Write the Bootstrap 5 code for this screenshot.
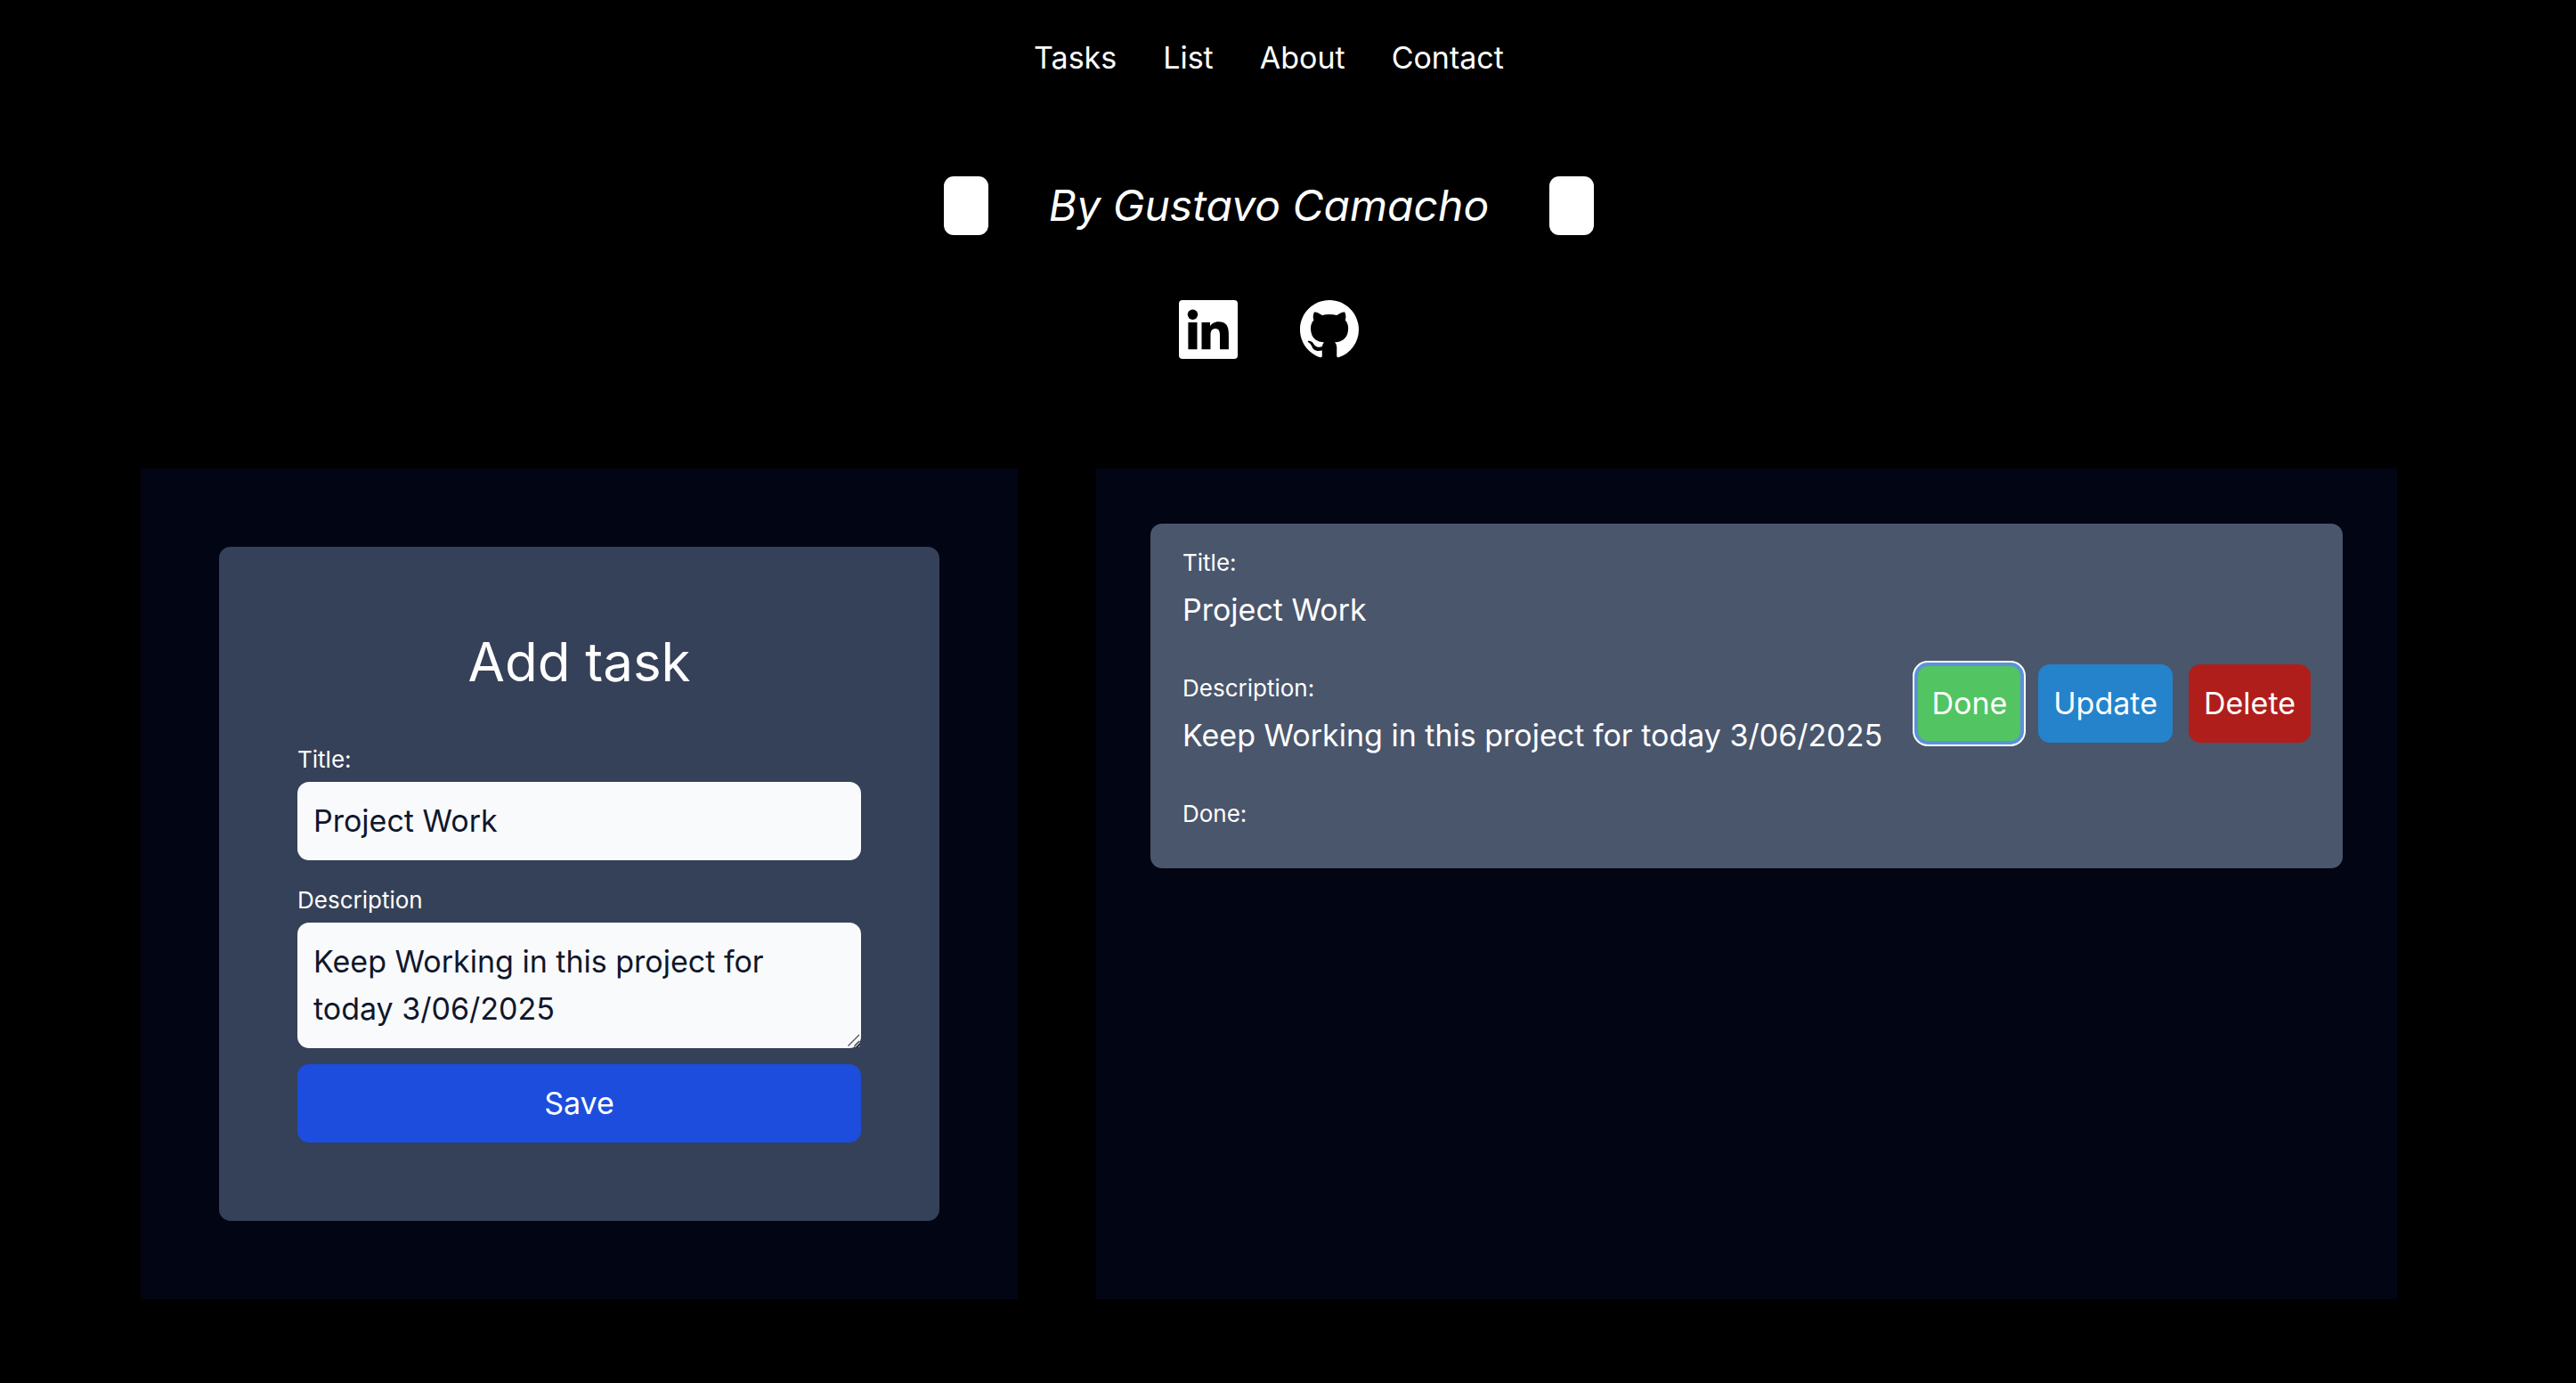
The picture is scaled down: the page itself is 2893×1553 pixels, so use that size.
<!DOCTYPE html>
<html lang="en">
<head>
<meta charset="utf-8">
<meta name="viewport" content="width=device-width, initial-scale=1">
<title>Tasks</title>
<link href="https://cdn.jsdelivr.net/npm/bootstrap@5.3.0/dist/css/bootstrap.min.css" rel="stylesheet">
<style>
  :root { --gutter: 88px; --radius: 13px; }
  body {
    background: #000; color: #fff;
    font-family: Inter, "Liberation Sans", sans-serif;
    font-size: 34px; line-height: 53px;
    padding: 38px 43px 94px 0;
  }
  .site-nav { gap: 52px; margin-bottom: 107px; }
  .site-nav a { color: #fff; text-decoration: none; }
  .byline { gap: 68px; margin-bottom: 73px; font-size: 48px; line-height: 66px; }
  .tile { width: 50px; height: 66px; border-radius: 11px; background: #fff; }
  .socials { gap: 70px; margin-bottom: 123px; }
  .socials a { color: #fff; }
  .socials svg { display: block; width: 66px; height: 66px; }
  .board { display: grid; grid-template-columns: 985fr 1461fr; gap: var(--gutter); margin: 0 158px; }
  .pane { background: #020514; }
  .pane-form { padding: var(--gutter); }
  .pane-list { padding: 62px 61px; }
  .task-form { background: #354158; border-radius: var(--radius); padding: var(--gutter); }
  .task-form h1 { font-size: 60px; line-height: 83px; font-weight: 400; margin: 0 0 50px; }
  .task-form label, .caption-line { font-size: 26px; }
  .task-form label { line-height: 35px; margin-bottom: 8px; }
  .task-form .form-control {
    background: #f9fafc; color: #0f172b; border: 0; border-radius: var(--radius);
    font-size: 34px; line-height: 53px; padding: 17px 18px 18px;
  }
  .task-form textarea.form-control { display: block; min-height: 0; }
  .title-box { margin-bottom: 27px; }
  .notes-box { margin-bottom: 18px; }
  .grip { position: absolute; right: 1px; bottom: 2px; width: 14px; height: 14px; pointer-events: none; }
  .btn-task {
    --bs-btn-color: #fff; --bs-btn-hover-color: #fff;
    border: 0; border-radius: var(--radius); color: #fff;
    font-size: 34px; line-height: 53px; padding: 17px 17px 18px;
  }
  .btn-save { background: #1c4ddc; }
  .btn-done { background: #52c462; outline: 4px solid #5b92da; outline-offset: -2px; box-shadow: 0 0 0 4px #fff; }
  .btn-update { background: #2483cb; }
  .btn-delete { background: #b01e1b; }
  .task-item { background: #4a566c; border-radius: var(--radius); padding: 17px 36px 0; }
  .task-item dl { margin: 0; }
  .task-item dt { font-weight: 400; }
  .task-item dd { margin: 0 0 35px; }
  .actions { gap: 18px; }
</style>
</head>
<body>
<header>
  <nav class="site-nav d-flex justify-content-center" aria-label="Main">
    <a href="#tasks">Tasks</a>
    <a href="#list">List</a>
    <a href="#about">About</a>
    <a href="#contact">Contact</a>
  </nav>
  <div class="byline d-flex justify-content-center align-items-center">
    <span class="tile"></span>
    <em>By Gustavo Camacho</em>
    <span class="tile"></span>
  </div>
  <div class="socials d-flex justify-content-center">
    <a href="#linkedin" aria-label="LinkedIn">
      <svg viewBox="0 0 66 66" aria-hidden="true"><rect width="66" height="66" rx="4" fill="currentColor"/><g fill="#000"><circle cx="15.5" cy="16.2" r="5.7"/><path d="M10.4 25h10.1v30.3H10.4zM25.5 25h9.5v4.2h.1c1.5-2.6 4.7-5 9.3-5 9.3 0 11.5 5.6 11.5 14v17.1H46V40.3c0-3.7-.3-8.2-5.1-8.2s-5.4 4-5.4 8v15.2h-10z"/></g></svg>
    </a>
    <a href="#github" aria-label="GitHub">
      <svg viewBox="0 0 16 16" fill="currentColor" aria-hidden="true"><path d="M8 0C3.58 0 0 3.58 0 8c0 3.54 2.29 6.53 5.47 7.59.4.07.55-.17.55-.38 0-.19-.01-.82-.01-1.49-2.01.37-2.53-.49-2.69-.94-.09-.23-.48-.94-.82-1.13-.28-.15-.68-.52-.01-.53.63-.01 1.08.58 1.23.82.72 1.21 1.87.87 2.33.66.07-.52.28-.87.51-1.07-1.78-.2-3.64-.89-3.64-3.95 0-.87.31-1.59.82-2.15-.08-.2-.36-1.02.08-2.12 0 0 .67-.21 2.2.82.64-.18 1.32-.27 2-.27s1.36.09 2 .27c1.53-1.04 2.2-.82 2.2-.82.44 1.1.16 1.92.08 2.12.51.56.82 1.27.82 2.15 0 3.07-1.87 3.75-3.65 3.95.29.25.54.73.54 1.48 0 1.07-.01 1.93-.01 2.2 0 .21.15.46.55.38A8.01 8.01 0 0 0 16 8c0-4.42-3.58-8-8-8"/></svg>
    </a>
  </div>
</header>
<main class="board">
  <section class="pane pane-form" id="tasks">
    <form class="task-form d-flex flex-column">
      <h1 class="text-center">Add task</h1>
      <label for="title">Title:</label>
      <input class="form-control title-box" id="title" type="text" value="Project Work">
      <label for="description">Description</label>
      <div class="notes-box position-relative">
        <textarea class="form-control" id="description" rows="2">Keep Working in this project for today 3/06/2025</textarea>
        <svg class="grip" viewBox="0 0 14 14" fill="none" stroke="#55575c" stroke-width="1.4" aria-hidden="true"><path d="M.5 13.500 13 1M7.500 13.500 13 8"/></svg>
      </div>
      <button class="btn btn-task btn-save w-100" type="button">Save</button>
    </form>
  </section>
  <section class="pane pane-list" id="list">
    <article class="task-item d-flex justify-content-between align-items-center">
      <dl>
        <dt class="caption-line">Title:</dt>
        <dd>Project Work</dd>
        <dt class="caption-line">Description:</dt>
        <dd>Keep Working in this project for today 3/06/2025</dd>
        <dt class="caption-line">Done:</dt>
        <dd></dd>
      </dl>
      <div class="actions d-flex">
        <button class="btn btn-task btn-done" type="button">Done</button>
        <button class="btn btn-task btn-update" type="button">Update</button>
        <button class="btn btn-task btn-delete" type="button">Delete</button>
      </div>
    </article>
  </section>
</main>
<script src="https://cdn.jsdelivr.net/npm/bootstrap@5.3.0/dist/js/bootstrap.bundle.min.js"></script>
</body>
</html>
